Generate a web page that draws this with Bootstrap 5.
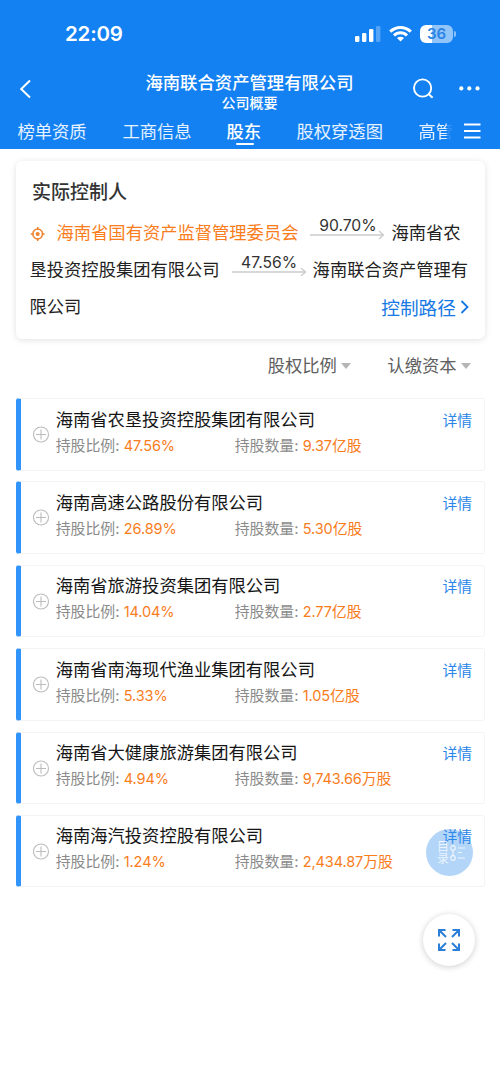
<!DOCTYPE html>
<html lang="zh-CN">
<head>
<meta charset="utf-8">
<meta name="viewport" content="width=device-width, initial-scale=1">
<title>海南联合资产管理有限公司</title>
<link href="https://cdn.jsdelivr.net/npm/bootstrap@5.3.0/dist/css/bootstrap.min.css" rel="stylesheet">
<style>
body{font-family:Inter,"Noto Sans CJK SC",sans-serif;color:#222;background:#fff;height:1084px;overflow:hidden;font-size:17.3px;line-height:1}
svg{display:block;flex:none}
.app-head{background:#1481f2;height:149px;color:#fff}
.status-row{height:68px;padding:0 44px 0 65px}
.clock{font-size:20.5px;font-weight:600;letter-spacing:-.2px}
.battery{width:33px;height:18px;border-radius:6px;background:linear-gradient(90deg,#fff 36%,#91c4f9 36%);color:#2a83e4;font-size:15px;font-weight:600;line-height:18px;text-align:center}
.battery-tip{width:2px;height:6px;border-radius:0 2px 2px 0;background:#8dc2f9;margin-left:1px}
.title-row{height:43px;padding:0 20px 0 19px}
.title-main{font-size:17.35px;font-weight:500;line-height:22px;margin-top:4px}
.title-sub{font-size:14px;line-height:17px;font-weight:500}
.tab-row{height:38px;padding-left:17.5px;white-space:nowrap}
.tab-row a{color:#e6f2ff;text-decoration:none;line-height:42px;height:38px}
.tab-row a.active{color:#fff;font-weight:500;position:relative}
.tab-row a.active::after{content:"";position:absolute;left:9px;bottom:4px;width:18px;height:2.5px;border-radius:2px;background:#fff}
.cut{width:36px;-webkit-mask-image:linear-gradient(90deg,#000 74%,rgba(0,0,0,.15) 80%)}
.control-card{margin:12px 15px 0 16px;height:178px;border-radius:6px;box-shadow:0 1px 6px rgba(0,0,0,.12);padding:20px 10px 0 13.5px}
.control-card h1{font-size:19px;font-weight:500;line-height:23px;margin:0 0 10px 2.5px;color:#333}
.chain{line-height:37.2px;margin:0}
.orange{color:#f97d1c}
.arrow{display:inline-block;width:75px;height:23px;margin:0 6px 0 12px;vertical-align:8.5px;line-height:18px;font-size:15.7px;text-align:center;position:relative;color:#333}
.arrow svg{position:absolute;left:0;bottom:0}
.path-link{color:#1678e2;font-size:18.7px;text-decoration:none;margin:2px 6px 0 0}
.sort-row{height:59px;padding-right:29px;gap:36px;color:#606060;line-height:53px;clear:both}
.tri{display:inline-block;border:5.5px solid transparent;border-top:6.5px solid #b5b5b5;border-bottom:0;margin-left:4.5px;vertical-align:3px}
.holders{padding:0 15px 0 16px;gap:10.9px}
.holder{height:72.5px;border:1px solid #f4f4f4;border-left:5px solid #3194fa;border-radius:3px;padding:8.5px 12px 0 11.5px}
.holder .plus{margin:18.5px 6.2px 0 0}
.hname{color:#151515;line-height:24px}
.meta{font-size:14.9px;line-height:24px;margin-top:2px;color:#8b8b8b;white-space:nowrap}
.num{font-size:14.5px;letter-spacing:-.1px}
.meta>div:first-child{width:179px}
.detail{font-size:14.8px;color:#2986e9;text-decoration:none;line-height:27px}
.toc-btn{position:absolute;left:426px;top:828.5px;width:47px;height:47px;border-radius:50%;background:rgba(49,142,235,.37);color:rgba(255,255,255,.75);font-size:12px;line-height:12.5px;padding:12px 0 0 11px}
.expand-btn{position:absolute;left:423px;top:914px;width:52px;height:52px;border-radius:50%;background:#fff;box-shadow:0 1px 6px rgba(0,0,0,.2)}
</style>
</head>
<body class="position-relative">
<header class="app-head">
  <div class="status-row d-flex align-items-center">
    <span class="clock me-auto">22:09</span>
    <svg width="26" height="18" viewBox="0 0 26 18" fill="#fff"><rect x="0" y="11" width="4.4" height="6" rx="1.2"/><rect x="7" y="8" width="4.4" height="9" rx="1.2"/><rect x="14" y="4" width="4.4" height="13" rx="1.2"/><rect x="21" y="1" width="4.4" height="16" rx="1.2" opacity=".28"/></svg>
    <svg class="ms-2" width="23" height="18" viewBox="0 0 23 18" fill="none" stroke="#fff" stroke-width="3"><path d="M1.2 6.6a14.7 14.7 0 0 1 20.6 0M5 10.5a9.2 9.2 0 0 1 13 0"/><path d="M11.5 16.5 8 13.1a5 5 0 0 1 7 0z" fill="#fff" stroke="none"/></svg>
    <span class="battery ms-2">36</span><span class="battery-tip"></span>
  </div>
  <div class="title-row d-flex justify-content-between">
    <svg width="68" height="43" viewBox="0 0 68 43" fill="none" stroke="#fff" stroke-width="2"><path d="M11 12.5 2.2 21 11 29.5"/></svg>
    <div class="text-center"><div class="title-main">海南联合资产管理有限公司</div><div class="title-sub">公司概要</div></div>
    <svg width="68" height="43" viewBox="0 0 68 43" fill="none" stroke="#fff" stroke-width="1.9"><circle cx="10.6" cy="20" r="8.6"/><path d="m16.3 25.7 4.3 4"/><g fill="#fff" stroke="none"><circle cx="49.3" cy="20.4" r="2.1"/><circle cx="57.3" cy="20.4" r="2.1"/><circle cx="65.5" cy="20.4" r="2.1"/></g></svg>
  </div>
  <nav class="tab-row d-flex">
    <a href="#" style="width:105px">榜单资质</a><a href="#" style="width:104px">工商信息</a><a href="#" class="active" style="width:70px">股东</a><a href="#" style="width:122px">股权穿透图</a><a href="#" class="cut">高管</a>
    <svg style="margin:12px 0 0 6px" width="24" height="16" viewBox="0 0 24 16" stroke="#fff" stroke-width="1.8"><path d="M3 1.500H19.500M3 8H19.500M3 14.500H19.500"/></svg>
  </nav>
</header>

<section class="control-card">
  <h1>实际控制人</h1>
  <p class="chain"><svg class="d-inline-block align-middle" style="margin:0 12px 0 0" width="15" height="16" viewBox="0 0 15 16" fill="none" stroke="#ee8432" stroke-width="1.5"><circle cx="7.7" cy="8" r="4.9"/><circle cx="7.7" cy="8" r="1.3" fill="#ee8432"/><path d="M7.700 1v3M7.700 12v3M.7 8h3M11.700 8h3"/></svg><span class="orange">海南省国有资产监督管理委员会</span><span class="arrow">90.70%<svg width="75" height="10" viewBox="0 0 75 10" fill="none" stroke="#ccc" stroke-width="1.3"><path d="M0 5h73M69 1l4.500 4L69 9"/></svg></span>海南省农垦投资控股集团有限公司<span class="arrow">47.56%<svg width="75" height="10" viewBox="0 0 75 10" fill="none" stroke="#ccc" stroke-width="1.3"><path d="M0 5h73M69 1l4.500 4L69 9"/></svg></span>海南联合资产管理有限公司<a href="#" class="path-link float-end d-flex align-items-center">控制路径<svg style="margin:-4px 0 0 4px" width="9" height="14" viewBox="0 0 9 14" fill="none" stroke="#1678e2" stroke-width="1.8"><path d="m1.500 1 6 6-6 6"/></svg></a></p>
</section>

<div class="sort-row d-flex justify-content-end"><span>股权比例<i class="tri"></i></span><span>认缴资本<i class="tri"></i></span></div>

<main class="holders d-flex flex-column" id="holders"></main>

<div class="toc-btn">目<br>录<svg class="position-absolute" style="left:24px;top:15px" width="18" height="19" viewBox="0 0 18 19" fill="none" stroke="#fff" stroke-opacity=".75" stroke-width="1.2"><circle cx="3" cy="4" r="2.3"/><circle cx="3" cy="14" r="2.3"/><path d="M3 6.300v5.400M8 4h7M8 8.500h4M8 14h7"/></svg></div>
<div class="expand-btn d-flex align-items-center justify-content-center">
  <svg width="22" height="22" viewBox="0 0 22 22" fill="none" stroke="#2b7fd6" stroke-width="2"><path d="M1 7.500V1h6.500M1 1l7 7M14.500 1H21v6.500M21 1l-7 7M1 14.500V21h6.500M1 21l7-7M21 14.500V21h-6.500M21 21l-7-7"/></svg>
</div>

<script src="https://cdn.jsdelivr.net/npm/bootstrap@5.3.0/dist/js/bootstrap.bundle.min.js"></script>
<script>
const holders = [
  ["海南省农垦投资控股集团有限公司", "47.56%", "9.37", "亿股"],
  ["海南高速公路股份有限公司", "26.89%", "5.30", "亿股"],
  ["海南省旅游投资集团有限公司", "14.04%", "2.77", "亿股"],
  ["海南省南海现代渔业集团有限公司", "5.33%", "1.05", "亿股"],
  ["海南省大健康旅游集团有限公司", "4.94%", "9,743.66", "万股"],
  ["海南海汽投资控股有限公司", "1.24%", "2,434.87", "万股"]
];
document.getElementById("holders").innerHTML = holders.map(([name, ratio, count, unit]) => `
  <article class="holder d-flex align-items-start">
    <svg class="plus" width="17" height="17" viewBox="0 0 17 17" fill="none" stroke="#bcbcbc" stroke-width="1.1"><circle cx="8" cy="8.500" r="7.500"/><path d="M8 3.500v10M3 8.500h10"/></svg>
    <div class="flex-grow-1">
      <div class="hname">${name}</div>
      <div class="meta d-flex"><div>持股比例: <span class="orange num">${ratio}</span></div><div>持股数量: <span class="orange"><span class="num">${count}</span>${unit}</span></div></div>
    </div>
    <a href="#" class="detail">详情</a>
  </article>`).join("");
</script>
</body>
</html>
